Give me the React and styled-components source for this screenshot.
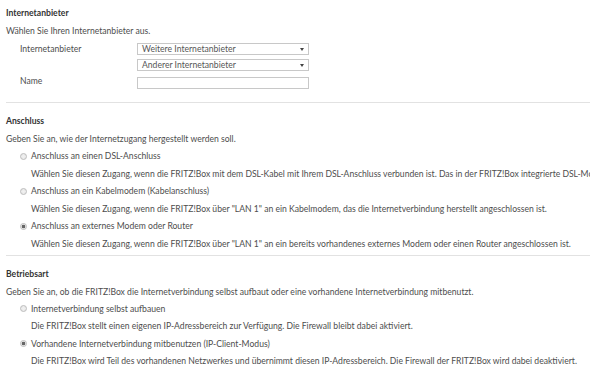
import React from 'react';
import styled, { createGlobalStyle } from 'styled-components';

const GlobalStyle = createGlobalStyle`
  html, body {
    margin: 0;
    padding: 0;
    background: #fff;
  }
  body {
    font-family: Lato, "Liberation Sans", sans-serif;
    font-size: 8.6px;
    color: #4d4d4d;
    overflow: hidden;
  }
`;

const Page = styled.div`
  width: 590px;
  height: 372px;
  overflow: hidden;
  padding: 6px 0 0 6px;
  box-sizing: border-box;
  white-space: nowrap;
`;

const Section = styled.section`
  padding-bottom: 4px;
  & + & {
    border-top: 1px solid #e2e2e2;
    padding-top: 11px;
  }
`;

const Heading = styled.h2`
  margin: 0;
  font-size: 8.6px;
  font-weight: 700;
  color: #333;
  line-height: 14px;
`;

const Intro = styled.p`
  margin: 4px 0 0;
  line-height: 14px;
`;

const FormGrid = styled.div`
  display: grid;
  grid-template-columns: 117px 172px;
  grid-template-rows: 12px 12px 12px;
  row-gap: 4px;
  padding: 5px 0 11px 14px;
  align-items: center;
`;

const Label = styled.span`
  line-height: 12px;
  grid-row: ${p => p.row};
`;

const Select = styled.div`
  grid-column: 2;
  grid-row: ${p => p.row};
  height: 12px;
  box-sizing: border-box;
  border: 1px solid #c8c8c8;
  display: flex;
  align-items: center;
  justify-content: space-between;
  padding: 0 4px;
  color: #555;
  line-height: 10px;
  &::after {
    content: '';
    border-left: 2px solid transparent;
    border-right: 2px solid transparent;
    border-top: 3px solid #444;
  }
`;

const TextInput = styled.div`
  grid-column: 2;
  grid-row: ${p => p.row};
  height: 12px;
  margin-top: 4px;
  box-sizing: border-box;
  border: 1px solid #c8c8c8;
`;

const OptionList = styled.div`
  padding: 3px 0 0 14px;
`;

const Option = styled.div`
  display: grid;
  grid-template-columns: 11px auto;
  row-gap: 3.5px;
  & + & {
    margin-top: 3.5px;
  }
`;

const Radio = styled.span`
  width: 7px;
  height: 7px;
  border-radius: 50%;
  border: 1px solid #bcbcbc;
  background: radial-gradient(circle, ${p => (p.checked ? '#666 0 1.6px, #eee 2.1px' : '#f1f1f1 0, #e6e6e6 100%')});
  align-self: center;
  box-sizing: border-box;
`;

const OptionLabel = styled.span`
  line-height: 14px;
`;

const OptionHint = styled.span`
  grid-column: 2;
  line-height: 14px;
`;

const RadioOption = ({ checked, label, hint }) => (
  <Option>
    <Radio checked={checked} />
    <OptionLabel>{label}</OptionLabel>
    <OptionHint>{hint}</OptionHint>
  </Option>
);

export default function App() {
  return (
    <>
      <GlobalStyle />
      <Page>
        <Section>
          <Heading>Internetanbieter</Heading>
          <Intro>Wählen Sie Ihren Internetanbieter aus.</Intro>
          <FormGrid>
            <Label row={1}>Internetanbieter</Label>
            <Select row={1}>Weitere Internetanbieter</Select>
            <Select row={2}>Anderer Internetanbieter</Select>
            <Label row={3}>Name</Label>
            <TextInput row={3} />
          </FormGrid>
        </Section>
        <Section>
          <Heading>Anschluss</Heading>
          <Intro>Geben Sie an, wie der Internetzugang hergestellt werden soll.</Intro>
          <OptionList>
            <RadioOption
              label="Anschluss an einen DSL-Anschluss"
              hint="Wählen Sie diesen Zugang, wenn die FRITZ!Box mit dem DSL-Kabel mit Ihrem DSL-Anschluss verbunden ist. Das in der FRITZ!Box integrierte DSL-Modem wird genutzt."
            />
            <RadioOption
              label="Anschluss an ein Kabelmodem (Kabelanschluss)"
              hint={'Wählen Sie diesen Zugang, wenn die FRITZ!Box über "LAN 1" an ein Kabelmodem, das die Internetverbindung herstellt angeschlossen ist.'}
            />
            <RadioOption
              checked
              label="Anschluss an externes Modem oder Router"
              hint={'Wählen Sie diesen Zugang, wenn die FRITZ!Box über "LAN 1" an ein bereits vorhandenes externes Modem oder einen Router angeschlossen ist.'}
            />
          </OptionList>
        </Section>
        <Section>
          <Heading>Betriebsart</Heading>
          <Intro>Geben Sie an, ob die FRITZ!Box die Internetverbindung selbst aufbaut oder eine vorhandene Internetverbindung mitbenutzt.</Intro>
          <OptionList>
            <RadioOption
              label="Internetverbindung selbst aufbauen"
              hint="Die FRITZ!Box stellt einen eigenen IP-Adressbereich zur Verfügung. Die Firewall bleibt dabei aktiviert."
            />
            <RadioOption
              checked
              label="Vorhandene Internetverbindung mitbenutzen (IP-Client-Modus)"
              hint="Die FRITZ!Box wird Teil des vorhandenen Netzwerkes und übernimmt diesen IP-Adressbereich. Die Firewall der FRITZ!Box wird dabei deaktiviert."
            />
          </OptionList>
        </Section>
      </Page>
    </>
  );
}
